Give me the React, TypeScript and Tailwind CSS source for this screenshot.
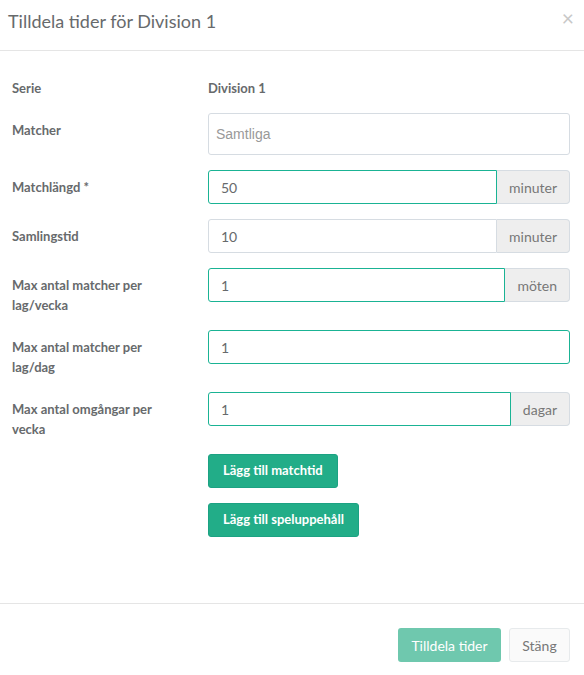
import React from "react";

const font = { fontFamily: "Lato, 'Open Sans', sans-serif" };

function Label({ children }: { children: React.ReactNode }) {
  return (
    <div className="w-[208px] shrink-0 pl-3 pr-[56px] pt-[7px] text-[13px] font-bold leading-5 text-[#676a6c]">
      {children}
    </div>
  );
}

function Field({
  value,
  addon,
  focused,
}: {
  value: string;
  addon?: string;
  focused?: boolean;
}) {
  const border = focused ? "border-[#1ab394]" : "border-[#d6dce2]";
  return (
    <div className="flex h-[34px] flex-1">
      <div
        className={`flex flex-1 items-center border ${border} bg-white pl-3 text-[14px] text-[#676a6c] ${
          addon ? "rounded-l-[3px]" : "rounded-[3px]"
        }`}
      >
        {value}
      </div>
      {addon && (
        <div className="flex items-center rounded-r-[4px] border border-l-0 border-[#d6dce2] bg-[#eeeeee] px-3 text-[14px] text-[#777]">
          {addon}
        </div>
      )}
    </div>
  );
}

export default function App() {
  return (
    <div className="w-[584px] h-[675px] bg-white" style={font}>
      <div className="flex h-[51px] items-start justify-between border-b border-[#e5e5e5]">
        <div className="pl-2 pt-[9px] text-[18px] leading-6 text-[#676a6c]">
          Tilldela tider för Division 1
        </div>
        <div className="pr-[10px] pt-[6px] text-[21px] leading-6 text-[#c8c8c8]">×</div>
      </div>
      <div className="h-[552px] pr-[14px] pt-[27px]">
        <div className="mb-[15px] flex">
          <div className="w-[208px] shrink-0 pl-3 text-[13px] font-bold leading-5 text-[#676a6c]">
            Serie
          </div>
          <div className="text-[13px] font-bold leading-5 text-[#676a6c]">Division 1</div>
        </div>
        <div className="mb-[15px] flex">
          <Label>Matcher</Label>
          <div className="flex h-[42px] flex-1 items-center rounded-[3px] border border-[#d6dce2] pl-[7px] text-[14px] text-[#999]" style={{ fontFamily: "'Liberation Sans', Arial, sans-serif" }}>
            Samtliga
          </div>
        </div>
        <div className="mb-[15px] flex">
          <Label>Matchlängd *</Label>
          <Field value="50" addon="minuter" focused />
        </div>
        <div className="mb-[15px] flex">
          <Label>Samlingstid</Label>
          <Field value="10" addon="minuter" />
        </div>
        <div className="mb-[15px] flex">
          <Label>Max antal matcher per lag/vecka</Label>
          <Field value="1" addon="möten" focused />
        </div>
        <div className="mb-[15px] flex">
          <Label>Max antal matcher per lag/dag</Label>
          <Field value="1" focused />
        </div>
        <div className="mb-[15px] flex">
          <Label>Max antal omgångar per vecka</Label>
          <Field value="1" addon="dagar" focused />
        </div>
        <div className="flex flex-col items-start gap-[15px] pl-[208px]">
          <button className="h-[34px] rounded-[3px] border border-[#1ca283] bg-[#22ad88] px-[14px] text-[13px] font-bold text-white">
            Lägg till matchtid
          </button>
          <button className="h-[34px] rounded-[3px] border border-[#1ca283] bg-[#22ad88] px-[14px] text-[13px] font-bold text-white">
            Lägg till speluppehåll
          </button>
        </div>
      </div>
      <div className="flex justify-end gap-2 border-t border-[#e5e5e5] pr-[14px] pt-[24px]">
        <button className="h-[34px] w-[103px] rounded-[3px] bg-[#6fc8ae] text-[14px] text-white">
          Tilldela tider
        </button>
        <button className="h-[34px] w-[61px] rounded-[3px] border border-[#e7eaec] bg-[#fafafa] text-[14px] text-[#777]">
          Stäng
        </button>
      </div>
    </div>
  );
}
